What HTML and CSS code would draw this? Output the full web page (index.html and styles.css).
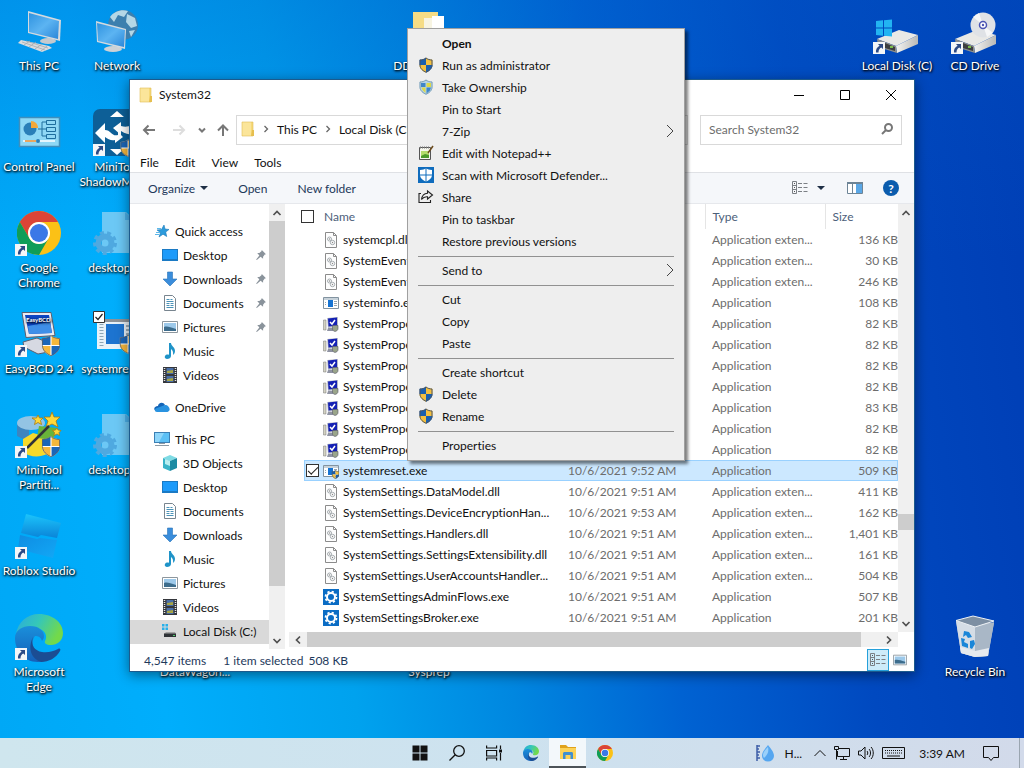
FILE: index.html
```html
<!DOCTYPE html>
<html lang="en">

<head>
    <meta charset="UTF-8">
    <meta name="viewport" content="width=device-width, initial-scale=1.0">
    <title>System32</title>
    <link rel="stylesheet" href="styles.css">
</head>

<body>
    <svg class="sprite" aria-hidden="true">
        <defs>
            <clipPath id="shieldClip"><path d="M8 .5C6.5 2 4 2.7 1.5 2.7V8c0 4 3.5 6.3 6.5 7.7 3-1.4 6.5-3.7 6.5-7.7V2.7C12 2.7 9.5 2 8 .5z"/></clipPath>
            <linearGradient id="screen" x1="0" y1="0" x2="1" y2="1"><stop offset="0" stop-color="#2f93e0"/><stop offset=".5" stop-color="#5cb4f2"/><stop offset="1" stop-color="#2a86d8"/></linearGradient>
            <linearGradient id="edgeA" x1="0" y1="0" x2="1" y2=".4"><stop offset="0" stop-color="#2aa9e0"/><stop offset=".5" stop-color="#35c7b8"/><stop offset="1" stop-color="#73d94a"/></linearGradient>
            <linearGradient id="edgeB" x1="0" y1="0" x2="0" y2="1"><stop offset="0" stop-color="#1a8fdb"/><stop offset="1" stop-color="#1560b8"/></linearGradient>
            <linearGradient id="driveSide" x1="0" y1="0" x2="1" y2="0"><stop offset="0" stop-color="#f4f4f2"/><stop offset="1" stop-color="#b9b9b6"/></linearGradient>
            <linearGradient id="roblox" x1="0" y1="0" x2="0" y2="1"><stop offset="0" stop-color="#1cc4fb"/><stop offset="1" stop-color="#0a84d8"/></linearGradient>
            <linearGradient id="robloxLow" x1="0" y1="0" x2="1" y2="1"><stop offset="0" stop-color="#0f8ce2"/><stop offset="1" stop-color="#12a8f6"/></linearGradient>
        </defs>

        <symbol id="shield" viewBox="0 0 16 16">
            <g clip-path="url(#shieldClip)">
                <path fill="#1a5fae" d="M0 0h8v8H0zM8 8h8v8H8z"/>
                <path fill="#f4c03f" d="M8 0h8v8H8zM0 8h8v8H0z"/>
            </g>
            <path fill="none" stroke="#4c5560" d="M8 1C6.5 2.3 4 3 2 3v5c0 3.8 3.2 6 6 7.2C10.8 14 14 11.8 14 8V3c-2 0-4.5-.7-6-2z"/>
        </symbol>
        <symbol id="shield-big" viewBox="0 0 16 16">
            <g clip-path="url(#shieldClip)">
                <path fill="#fff" d="M0 0h16v16H0z"/>
                <path fill="#1b66b8" d="M0 0h7.6v7.6H0zM8.4 8.4h8v8h-8z"/>
                <path fill="#f6b73c" d="M8.4 0h8v7.6h-8zM0 8.4h7.6v8H0z"/>
            </g>
            <path fill="none" stroke="#55606c" stroke-width=".6" d="M8 .8C6.5 2.2 4 2.9 1.8 2.9V8c0 3.9 3.4 6.2 6.2 7.4 2.8-1.2 6.2-3.5 6.2-7.4V2.9C12 2.9 9.5 2.2 8 .8z"/>
        </symbol>
        <symbol id="shield-light" viewBox="0 0 16 16">
            <g clip-path="url(#shieldClip)">
                <path fill="#b4d3e8" d="M0 0h16v16H0z"/>
                <path fill="#3f86c8" d="M3 4h4.5v4H3zM8.5 8.5H13l-1 3-3.5 3z"/>
                <path fill="#dcd94a" d="M8.5 4H13v4H8.5zM3.5 8.5h4V14l-3-3z"/>
            </g>
            <path fill="none" stroke="#7fa0b4" d="M8 1C6.5 2.3 4 3 2 3v5c0 3.8 3.2 6 6 7.2C10.8 14 14 11.8 14 8V3c-2 0-4.5-.7-6-2z"/>
        </symbol>
        <symbol id="shortcut" viewBox="0 0 12 12">
            <path fill="#f4f6f8" d="M0 0h12v12H0z"/>
            <path fill="#2c4a86" d="M5 2h5v5L8.3 5.5C6.5 6.5 5.5 8 5.5 10.5H3C2.5 7.5 4 5 6.6 3.7z"/>
        </symbol>
        <symbol id="chrome" viewBox="0 0 44 44">
            <circle cx="22" cy="22" r="22" fill="#fbc116"/>
            <path fill="#db4437" d="M2.9 11A22 22 0 0 1 41 11H22a11 11 0 0 0-9.5 16.5z"/>
            <path fill="#0f9d58" d="M2.9 11A22 22 0 0 0 22 44l9.5-16.5a11 11 0 0 1-19 0z"/>
            <circle cx="22" cy="22" r="11" fill="#fff"/>
            <circle cx="22" cy="22" r="9" fill="#3b78e7"/>
        </symbol>
        <symbol id="edge" viewBox="0 0 48 48">
            <path fill="url(#edgeA)" d="M1 20C3 8 12 0 24 0c14 0 24 9 24 19 0 8-6 12-12 12-5 0-7-2-6-4 3-5 0-12-9-13C12 13 4 15 1 20z"/>
            <path fill="url(#edgeB)" d="M0 24c0-8 8-12 15-12 9 0 14 5 14 10 0 2-1 4-2 5-1-4-4-5-7-5-3 3-4 12 3 18 3 3 7 4 10 4-3 3-6 4-10 4C9 48 0 37 0 24z"/>
            <path fill="#1b4d93" d="M18 23c-3 8 2 14 9 15 6 1 12-1 16-3 2-1 3 0 2 2-4 7-11 11-19 11-9-3-14-13-8-25z"/>
        </symbol>
        <symbol id="folder" viewBox="0 0 14 16">
            <path fill="#f6d978" d="M1 1h11v14H1z"/><path fill="#fbe59a" d="M1 1h9v14H1z"/>
            <path fill="#e9c04e" d="M11 9h2v6h-3z"/><path fill="none" stroke="#e0bd55" stroke-width=".6" d="M1 1h11v14H1z"/>
        </symbol>
        <symbol id="pc-small" viewBox="0 0 16 16">
            <path fill="#3b7fb4" d="M0 1h16v11H0z"/><path fill="#5cc0f5" d="M1 2h14v9H1z"/><path fill="#8fd6fa" d="M1 2h9L5 11H1z"/><path fill="#8c9aa5" d="M5 12h6v1H5zM1 14h14v1H1z"/>
        </symbol>
        <symbol id="star" viewBox="0 0 16 16">
            <path fill="#2c9bdc" stroke="#1a78b8" stroke-width=".6" d="M10 2l1 4 4 .5L11.700 9l1 4.500L9 11.200 5 14l1.500-4.500L3 7l4.500-.5z"/><path stroke="#5cb8ea" d="M2 9.500h4M1 11.500h4M3 5.500h4"/>
        </symbol>
        <symbol id="desk-small" viewBox="0 0 16 16"><path fill="#1b7ac4" d="M0 2h16v12H0z"/><path fill="#1e9bfa" d="M1 3h14v9H1z"/></symbol>
        <symbol id="down" viewBox="0 0 16 16"><path fill="#3a8ddb" stroke="#2873b8" stroke-width=".6" d="M5.5 1h5v7H15l-7 7-7-7h4.5z"/></symbol>
        <symbol id="doc" viewBox="0 0 16 16">
            <path fill="#fff" stroke="#78858f" d="M2.5.5h8l3 3v12h-11z"/><path stroke="#4b93b8" d="M4.5 4.5h3M8.5 4.5h2M4.5 6.5h7M4.5 8.5h3M8.5 8.5h3M4.5 10.5h3M8.5 10.5h3M4.5 12.5h7"/>
        </symbol>
        <symbol id="pic" viewBox="0 0 16 16">
            <path fill="#fff" stroke="#8d979e" d="M.5 2.5h15v11H.5z"/><path fill="#9dc9ea" d="M2 4h12v8H2z"/><path fill="#3c6c8c" d="M2 8c3-1 6 0 12 2v2H2z"/>
        </symbol>
        <symbol id="music" viewBox="0 0 16 16"><path fill="#1f93c8" d="M7 0h2c0 3 4 4 4 8 0 2-1 3-2 4 .5-3-.5-5-2-6v7c0 2-2 3-4 3-3 0-3-4 0-4.5 1 0 1.500 0 2 .2z"/></symbol>
        <symbol id="video" viewBox="0 0 16 16">
            <path fill="#34373c" d="M1 0h14v16H1z"/><path stroke="#e6e6e6" stroke-dasharray="1 1" stroke-width="1.5" d="M2.5 1v14M13.5 1v14"/><path fill="#4a6fa8" d="M4.5 1h7v6h-7zM4.5 9h7v6h-7z"/><path fill="#a7a545" d="M5 4l6-1v3H5zM5 12l6-1v3H5z"/>
        </symbol>
        <symbol id="cloud" viewBox="0 0 16 16"><path fill="#1565b8" d="M4 7C4 4 9 2 11 6l-6 6H2C-1 11 0 7 4 7z"/><path fill="#2a93e0" d="M2 12.8C0 12 1 9 3 9l4-1.5L11 6c3-.5 6 4 4 6-1 1-2 1-3 1H3z"/></symbol>
        <symbol id="cube" viewBox="0 0 16 16"><path fill="#7fdbe4" d="M1 3l7-3 7 3-7 3z"/><path fill="#39b4c8" d="M1 3l7 3v10l-7-3z"/><path fill="#1c8ba3" d="M15 3L8 6v10l7-3z"/><path fill="#b7eef0" d="M3 4l5 2v5L3 9z"/></symbol>
        <symbol id="disk-small" viewBox="0 0 16 16"><path fill="#28b0ea" d="M0 1h2.5v2.5H0zM3.5 1H6v2.5H3.500zM0 4.500h2.5V7H0zM3.5 4.500H6V7H3.500z"/><path fill="#a4a4a4" d="M4 9h9l1 2H2z"/><path fill="#2e3236" d="M2 10.5h12V14H2z"/><path fill="#4ecf6a" d="M11 12h2v1h-2z"/></symbol>
        <symbol id="pin" viewBox="0 0 12 12"><path fill="#8a939b" d="M7 0l5 5-1.5.5L8.500 8v2.500L5.500 8 1 12l-.8-.6L4 6.500 1.500 3.500H4L6.500 1.500z"/></symbol>

        <symbol id="dll" viewBox="0 0 16 16">
            <path fill="#fdfdfd" stroke="#8b8b8b" d="M2.5.5h8l3 3v12h-11z"/><path fill="none" stroke="#8b8b8b" d="M10.5.5v3h3"/>
            <circle cx="6.5" cy="7" r="2" fill="none" stroke="#a5acb0"/><circle cx="9.5" cy="10.5" r="2.2" fill="none" stroke="#a5acb0"/><circle cx="6.5" cy="7" r=".7" fill="#8b8b8b"/><circle cx="9.5" cy="10.5" r=".7" fill="#8b8b8b"/>
        </symbol>
        <symbol id="exe" viewBox="0 0 16 16"><path fill="#fff" stroke="#8293a0" d="M.5 2.5h15v11H.5z"/><path fill="#c7d2da" d="M1 3h14v2H1z"/><path fill="#1673d2" d="M5 5h5v7H5z"/><path stroke="#98a5ae" d="M11 6.5h3M11 8.5h3M11 10.5h3M2 7.5h1M2 9.5h1"/></symbol>
        <symbol id="exe-shield" viewBox="0 0 16 16"><use href="#exe" width="16" height="16"/><use href="#shield" x="8" y="7" width="9" height="9"/></symbol>
        <symbol id="props" viewBox="0 0 16 16">
            <path fill="#d4d2c2" stroke="#777" stroke-width=".5" d="M.5 4H3v10H.5z"/><path fill="#b9bcc9" d="M4 2l11-1v10L5 12z"/><path fill="#1420b4" d="M5 2.500l9-1v8l-8.500 1z"/>
            <path fill="none" stroke="#fff" stroke-width="1.5" d="M7 6l2 2 3-4"/><path fill="#8f93a3" d="M5 12h5v3H4z"/><path fill="#9aa58a" stroke="#556" stroke-width=".6" d="M9.500 9.500H15v3c0 2-1.500 2.500-3 3-1.500-.5-2.500-1-2.500-3z"/>
        </symbol>
        <symbol id="gear" viewBox="0 0 16 16"><path fill="#0a6cc4" d="M0 0h16v16H0z"/><circle cx="8" cy="8" r="4" fill="none" stroke="#fff" stroke-width="2"/><circle cx="8" cy="8" r="5.5" fill="none" stroke="#fff" stroke-width="1.8" stroke-dasharray="2.16 2.16"/></symbol>

        <symbol id="notepad" viewBox="0 0 16 16"><path fill="#f6f7ee" stroke="#555" d="M1.5 2.5h11v12h-11z"/><path fill="#b4dc6c" d="M3 6h8v7H3z"/><path fill="#4c9a2a" d="M3 11l4-2 4 1v3H3z"/><path stroke="#777" stroke-dasharray="1 1" stroke-width="2" d="M2 2.5h10"/><path stroke="#6b4a1c" stroke-width="1.5" d="M10 8l5-7"/></symbol>
        <symbol id="defender" viewBox="0 0 16 16"><path fill="#0f6cbd" d="M0 0h16v16H0z"/><path fill="#fff" d="M2 3c3 0 4.500-1 5.500-1.500v6H2zM8.500 1.500C9.500 2 11 3 14 3v4.500H8.500zM2 8.500h5.500v6C4.500 13 2.500 11.500 2 8.500zM8.500 8.500H14c-.5 3-2.500 4.500-5.500 6z"/></symbol>
        <symbol id="share" viewBox="0 0 16 16"><path fill="none" stroke="#222" stroke-width="1.1" d="M3 4.5H1v9h11.5V11M9.5 2l5 4-5 4V7.800C7 7.500 5 8.500 3.500 10.500 4 7 6 4.500 9.500 4.300z"/></symbol>

        <symbol id="drive" viewBox="0 0 48 48">
            <path fill="#e9e9e6" d="M4 31l22-9 19 5-22 11z"/><path fill="url(#driveSide)" d="M23 38l22-11v9l-21 9z"/><path fill="#8d8f8e" d="M4 31l19 7 1 7-19-6z"/><path fill="#3d3f40" d="M12 35l10 4v4l-10-3z"/><path fill="#7cbf4c" d="M17 38h3v2h-3z"/>
        </symbol>
        <symbol id="ini" viewBox="0 0 48 48">
            <path fill="#6cc8f5" d="M9 2h24l8 8v33H9z"/><path fill="#4ab0ea" d="M32 2v8h9z"/>
            <circle cx="12" cy="33" r="6.5" fill="none" stroke="#4fa9e0" stroke-width="6"/><circle cx="12" cy="33" r="10.5" fill="none" stroke="#4fa9e0" stroke-width="3" stroke-dasharray="4 3.33"/>
        </symbol>
        <symbol id="details" viewBox="0 0 16 16"><path fill="none" stroke="#7b7f84" d="M.5 1.5h4v12h-4zM.5 5.5h4M.5 9.5h4M6 3.5h4M11.500 3.500h4M6 7.500h4M11.500 7.500h4M6 11.500h4M11.500 11.500h4"/><path fill="#555" d="M2 3h1v1H2zM2 7h1v1H2zM2 11h1v1H2z"/></symbol>
        <symbol id="chev-up" viewBox="0 0 10 10"><path fill="none" stroke="#505050" stroke-width="1.7" d="M1.5 7L5 3.5 8.5 7"/></symbol>
        <symbol id="chev-down" viewBox="0 0 10 10"><path fill="none" stroke="#505050" stroke-width="1.7" d="M1.5 3L5 6.5 8.5 3"/></symbol>
        <symbol id="chev-left" viewBox="0 0 10 10"><path fill="none" stroke="#505050" stroke-width="1.7" d="M7 1.5L3.5 5 7 8.5"/></symbol>
        <symbol id="chev-right" viewBox="0 0 10 10"><path fill="none" stroke="#505050" stroke-width="1.7" d="M3 1.5L6.5 5 3 8.5"/></symbol>
        <symbol id="crumb" viewBox="0 0 10 10"><path fill="none" stroke="#666" stroke-width="1.3" d="M3.5 2l3 3-3 3"/></symbol>
        <symbol id="submenu" viewBox="0 0 8 14"><path fill="none" stroke="#444" d="M1 1l6 6-6 6"/></symbol>
    </svg>

    <main class="desktop">
        <a class="shortcut c1 r1" href="#">
            <svg viewBox="0 0 48 48"><path fill="#d9dcdf" d="M6 32L3 35l24 9 10-4-3-2z"/><path stroke="#a5abb0" stroke-width=".8" d="M7 34l23 8M11 33l22 7M9 37l6-4M14 39l7-5M20 41l7-5M26 43l6-5"/><ellipse cx="33" cy="33" rx="8" ry="3" fill="#c5cace"/><path fill="#d5dade" d="M13 3l33 9-1 21-32-8z"/><path fill="url(#screen)" d="M14 5l30 8-1 18-29-7z"/></svg>
            <span>This PC</span>
        </a>
        <a class="shortcut c2 r1" href="#">
            <svg viewBox="0 0 48 48"><circle cx="30" cy="17" r="15" fill="#3c7fae"/><path fill="#b4d7e6" d="M17 9c4-6 12-8 18-6l-4 6-6-2-4 7zM34 6l8 4 2 8-6 2-5-6zM36 23l6-1-4 7z"/><ellipse cx="20" cy="41" rx="9" ry="3" fill="#cdd2d6"/><path fill="#d5dade" d="M3 13l30 8-1 20-28-7z"/><path fill="url(#screen)" d="M4 15l28 7-1 17-26-6z"/></svg>
            <span>Network</span>
        </a>
        <a class="shortcut c6 r1" href="#">
            <svg viewBox="0 0 48 48"><path fill="#f5dc85" d="M8 4h25v38H8z"/><path fill="#f7f4e2" d="M19 10h20v30H19z"/><path fill="#fff" d="M27 8h12v14H27z"/></svg>
            <span>DD Utilities 1</span>
        </a>
        <a class="shortcut c12 r1" href="#">
            <svg viewBox="0 0 48 48"><use href="#drive"/><path fill="#22b4f2" d="M3 13l7-.7v7.200H3zM11 12.200l8-.7v8h-8zM3 20.500h7v7.200l-7-.7zM11 20.500h8v8l-8-.7z"/><use href="#shortcut" x="0" y="34" width="12" height="12"/></svg>
            <span>Local Disk (C)</span>
        </a>
        <a class="shortcut c13 r1" href="#">
            <svg viewBox="0 0 48 48"><use href="#drive"/><circle cx="32" cy="17" r="12.5" fill="#dfe2e6"/><path fill="#f6f7f8" d="M32 17L22 9l6-4zM32 17l10 8-6 4z"/><circle cx="32" cy="17" r="3.5" fill="#fff" stroke="#4b55b4" stroke-width="1.5"/><circle cx="32" cy="17" r="1.2" fill="#4b55b4"/><use href="#shortcut" x="0" y="34" width="12" height="12"/></svg>
            <span>CD Drive</span>
        </a>
        <a class="shortcut c1 r2" href="#">
            <svg viewBox="0 0 48 48"><path fill="#8fd8f5" stroke="#3f8fbd" stroke-width="1.5" d="M4.5 8.500h40v29h-40z"/><circle cx="15" cy="20" r="6.5" fill="#2a7fb8"/><path fill="#f2a83a" d="M16 19v-7c4 0 7 3 7 7z"/><path fill="none" stroke="#1e6e9e" d="M23 20h4M27 13v14M27 13h4M27 20h4M27 27h4M31.500 11.500h9v4h-9zM31.500 18.500h9v4h-9zM31.500 25.500h9v4h-9z"/><path stroke="#fff" stroke-width="1.5" d="M8 32h32"/><path stroke="#e88c2e" stroke-width="1.5" d="M10 32h11"/><circle cx="23" cy="32" r="2" fill="#2a7fb8"/></svg>
            <span>Control Panel</span>
        </a>
        <a class="shortcut c2 r2" href="#">
            <svg viewBox="0 0 48 48"><rect width="48" height="47" rx="7" fill="#0d5f97"/><path fill="#fff" d="M24 2l7 6H17zM2 24l10-10v7c6 0 7 7 13 5v-3l5 5-8 6v-3c-4 1-7-1-10-3v6zM20 19l8-6v4c4 1 6 1 12-1v10c-4-1-8-1-12-4v4zM17 40h14l-7 6z"/><use href="#shield-big" x="26" y="30" width="18" height="18"/><use href="#shortcut" y="35" width="12" height="12"/></svg>
            <span>MiniTool ShadowMaker</span>
        </a>
        <a class="shortcut c1 r3" href="#">
            <svg viewBox="0 0 48 48"><use href="#chrome" x="2" y="1" width="44" height="44"/><use href="#shortcut" y="34" width="12" height="12"/></svg>
            <span>Google Chrome</span>
        </a>
        <a class="shortcut c2 r3" href="#">
            <svg viewBox="0 0 48 48"><use href="#ini"/></svg>
            <span>desktop.ini</span>
        </a>
        <a class="shortcut c1 r4" href="#">
            <svg viewBox="0 0 48 48"><path fill="#d6d9e2" stroke="#5b6070" d="M8 31l14-4 14 6-3 8-10 2-14-7z"/><path fill="#e9ebf2" stroke="#5b6070" d="M7 1.500h29l4 23-29 2z"/><path fill="#0d46c4" d="M10 4h24l3 18-23 1z"/><path fill="#3f8fe8" d="M13 15l22-4 2 11-23 1z"/><text x="11" y="11" class="tiny">EasyBCD</text><use href="#shield-big" x="25" y="23" width="22" height="23"/><use href="#shortcut" y="34" width="12" height="12"/></svg>
            <span>EasyBCD 2.4</span>
        </a>
        <a class="shortcut c2 r4" href="#">
            <svg viewBox="0 0 48 48"><path fill="#e7f1f8" d="M4 8h42v30H4z"/><path fill="#8d9297" d="M4 8h42v3H4z"/><path fill="#1d74d0" d="M13 13h18v20H13z"/><path stroke="#8ea6b6" stroke-dasharray="1 2" stroke-width="4" d="M8.500 13v22"/><path stroke="#596a76" d="M33 15h10M33 19h10M33 23h10"/><use href="#shield-big" x="25" y="22" width="20" height="22"/><path fill="#fff" stroke="#333" d="M.5.5h11v11H.5z"/><path fill="none" stroke="#222" stroke-width="1.2" d="M2.500 6L5 8.500 9.500 3"/></svg>
            <span>systemreset...</span>
        </a>
        <a class="shortcut c1 r5" href="#">
            <svg viewBox="0 0 48 48"><path fill="#3d85bf" d="M2 11v13l12 6V12z"/><ellipse cx="16" cy="11" rx="14" ry="7" fill="#93c4e4"/><path fill="#f5d92a" d="M8 27l10-6 14 4v17c-8 4-18 3-24-2z"/><path fill="#69b33a" d="M24 14l18 2-4 12-16-2z"/><path fill="#ffd83a" stroke="#a87b12" stroke-width=".8" d="M37 0l2 5h6l-4 4 2 6-6-3-6 3 2-6-4-4h6zM23 3l1.500 3H28l-2.500 2.500 1 4-3.500-2-3.500 2 1-4L17 6h4.500zM42 16l1 2 3 .5-2 2 .5 3-2.500-1.500-3 1.500.5-3-2-2 3-.5z"/><path stroke="#30323a" stroke-width="2.5" d="M12 36L34 14"/><use href="#shield-big" x="25" y="23" width="22" height="23"/><use href="#shortcut" y="34" width="12" height="12"/></svg>
            <span>MiniTool Partiti...</span>
        </a>
        <a class="shortcut c2 r5" href="#">
            <svg viewBox="0 0 48 48"><use href="#ini"/></svg>
            <span>desktop.ini</span>
        </a>
        <a class="shortcut c1 r6" href="#">
            <svg viewBox="0 0 48 48"><path fill="url(#roblox)" d="M11 1l35 9-4 15-16-3-3 2-17-4z"/><path fill="url(#robloxLow)" d="M5 22l17 4 3-1 17 2-4 18L3 36z"/><use href="#shortcut" y="34" width="12" height="12"/></svg>
            <span>Roblox Studio</span>
        </a>
        <a class="shortcut c1 r7" href="#">
            <svg viewBox="0 0 48 48"><use href="#edge"/><use href="#shortcut" y="34" width="12" height="12"/></svg>
            <span>Microsoft Edge</span>
        </a>
        <a class="shortcut c3 r7" href="#"><svg viewBox="0 0 48 48"><use href="#folder"/></svg><span>DataWagon...</span></a>
        <a class="shortcut c6 r7" href="#"><svg viewBox="0 0 48 48"><use href="#folder"/></svg><span>Sysprep</span></a>
        <a class="shortcut c13 r7" href="#">
            <svg viewBox="0 0 48 48"><path fill="#b9c4d0" d="M5 7l38 2-6 33-13 1-14-4z"/><path fill="#d5dde6" d="M5 7l19 6v30l-14-4z"/><path fill="#a9b7c6" d="M24 13l19-5-6 34-13 1z"/><path fill="#e6eaee" d="M9 33l15 4 14-3-1 8-13 1-14-4z"/><path fill="#7d8fa3" stroke="#eef2f6" d="M5 6.500L22 2l21 5-19 6z"/><path fill="#1a86d8" d="M13 17l5 1 3 5-4 1-2-3-3 2zM10 24l4 1-1 3 4 2v4l-6-2zM19 27l4-1 1 4-3 5-2-1z"/></svg>
            <span>Recycle Bin</span>
        </a>

        <section class="window">
            <header class="titlebar">
                <svg class="folder-icon"><use href="#folder"/></svg>
                <span class="title">System32</span>
                <button class="caption" aria-label="Minimize"><svg viewBox="0 0 10 10"><path d="M0 5.500h10"/></svg></button>
                <button class="caption" aria-label="Maximize"><svg viewBox="0 0 10 10"><path d="M.5.5h9v9h-9z"/></svg></button>
                <button class="caption" aria-label="Close"><svg viewBox="0 0 10 10"><path d="M0 0l10 10M10 0L0 10"/></svg></button>
            </header>

            <div class="navbar">
                <button class="nav-btn" aria-label="Back"><svg viewBox="0 0 14 12"><path d="M13 6H2M6.500 1.500L2 6l4.500 4.500"/></svg></button>
                <button class="nav-btn forward" aria-label="Forward"><svg viewBox="0 0 14 12"><path d="M1 6h11M7.500 1.500L12 6l-4.500 4.500"/></svg></button>
                <button class="nav-btn recent" aria-label="Recent locations"><svg viewBox="0 0 14 12"><path d="M4 4.500l3 3 3-3"/></svg></button>
                <button class="nav-btn up" aria-label="Up"><svg viewBox="0 0 14 12"><path d="M7 12V1.500M2 6.500l5-5 5 5"/></svg></button>
                <div class="address">
                    <svg class="folder-icon"><use href="#folder"/></svg>
                    <svg class="crumb-sep"><use href="#crumb"/></svg>
                    <a href="#">This PC</a>
                    <svg class="crumb-sep"><use href="#crumb"/></svg>
                    <a href="#">Local Disk (C:)</a>
                </div>
                <div class="search">
                    <input type="text" placeholder="Search System32" aria-label="Search System32">
                    <svg viewBox="0 0 12 12"><circle cx="7.500" cy="4.500" r="3.500"/><path d="M5 7l-4 4"/></svg>
                </div>
            </div>

            <nav class="menubar">
                <button>File</button>
                <button>Edit</button>
                <button>View</button>
                <button>Tools</button>
            </nav>

            <div class="toolbar">
                <button class="organize">Organize <svg viewBox="0 0 8 4"><path d="M0 0h8L4 4z"/></svg></button>
                <button class="open">Open</button>
                <button>New folder</button>
                <span class="spacer"></span>
                <button class="views" aria-label="Change your view"><svg class="i16"><use href="#details"/></svg><svg class="drop" viewBox="0 0 8 4"><path d="M0 0h8L4 4z"/></svg></button>
                <button aria-label="Preview pane"><svg class="i16" viewBox="0 0 16 16"><path fill="#fff" stroke="#6d8496" d="M.5 2.500h15v11H.5z"/><path fill="#6d8496" d="M0 2h16v2H0z"/><path fill="#5aa7e6" d="M9 4h6v9H9z"/><path stroke="#6d8496" d="M5.500 4v9"/></svg></button>
                <button class="help" aria-label="Help">?</button>
            </div>

            <div class="content">
                <aside class="tree">
                    <a class="lvl1" href="#"><svg><use href="#star"/></svg>Quick access</a>
                    <a href="#"><svg><use href="#desk-small"/></svg>Desktop<svg class="pin"><use href="#pin"/></svg></a>
                    <a href="#"><svg><use href="#down"/></svg>Downloads<svg class="pin"><use href="#pin"/></svg></a>
                    <a href="#"><svg><use href="#doc"/></svg>Documents<svg class="pin"><use href="#pin"/></svg></a>
                    <a href="#"><svg><use href="#pic"/></svg>Pictures<svg class="pin"><use href="#pin"/></svg></a>
                    <a href="#"><svg><use href="#music"/></svg>Music</a>
                    <a href="#"><svg><use href="#video"/></svg>Videos</a>
                    <a class="lvl1 group" href="#"><svg><use href="#cloud"/></svg>OneDrive</a>
                    <a class="lvl1 group" href="#"><svg><use href="#pc-small"/></svg>This PC</a>
                    <a href="#"><svg><use href="#cube"/></svg>3D Objects</a>
                    <a href="#"><svg><use href="#desk-small"/></svg>Desktop</a>
                    <a href="#"><svg><use href="#doc"/></svg>Documents</a>
                    <a href="#"><svg><use href="#down"/></svg>Downloads</a>
                    <a href="#"><svg><use href="#music"/></svg>Music</a>
                    <a href="#"><svg><use href="#pic"/></svg>Pictures</a>
                    <a href="#"><svg><use href="#video"/></svg>Videos</a>
                    <a class="current" href="#"><svg><use href="#disk-small"/></svg>Local Disk (C:)</a>
                </aside>
                <div class="vscroll tree-scroll">
                    <button aria-label="Scroll up"><svg><use href="#chev-up"/></svg></button>
                    <div class="thumb"></div>
                    <button aria-label="Scroll down"><svg><use href="#chev-down"/></svg></button>
                </div>

                <div class="files">
                    <table>
                        <thead>
                            <tr>
                                <th class="name"><label><input type="checkbox" class="check">Name</label></th>
                                <th class="date">Date</th>
                                <th class="type">Type</th>
                                <th class="size">Size</th>
                            </tr>
                        </thead>
                        <tbody id="rows"></tbody>
                    </table>
                </div>
                <div class="vscroll file-scroll">
                    <button aria-label="Scroll up"><svg><use href="#chev-up"/></svg></button>
                    <div class="thumb"></div>
                    <button aria-label="Scroll down"><svg><use href="#chev-down"/></svg></button>
                </div>
                <div class="hscroll">
                    <button aria-label="Scroll left"><svg><use href="#chev-left"/></svg></button>
                    <div class="thumb"></div>
                    <button aria-label="Scroll right"><svg><use href="#chev-right"/></svg></button>
                </div>
            </div>

            <footer class="statusbar">
                <span class="count">4,547 items</span>
                <span>1 item selected</span>
                <span>508 KB</span>
                <span class="spacer"></span>
                <button class="active" aria-label="Details"><svg class="i16"><use href="#details"/></svg></button>
                <button aria-label="Large icons"><svg class="i14"><use href="#pic"/></svg></button>
            </footer>
        </section>

        <div class="context-menu" role="menu">
            <button class="default">Open</button>
            <button><svg class="ico"><use href="#shield"/></svg>Run as administrator</button>
            <button><svg class="ico"><use href="#shield-light"/></svg>Take Ownership</button>
            <button>Pin to Start</button>
            <button>7-Zip<svg class="sub"><use href="#submenu"/></svg></button>
            <button><svg class="ico"><use href="#notepad"/></svg>Edit with Notepad++</button>
            <button><svg class="ico"><use href="#defender"/></svg>Scan with Microsoft Defender...</button>
            <button><svg class="ico"><use href="#share"/></svg>Share</button>
            <button>Pin to taskbar</button>
            <button>Restore previous versions</button>
            <hr>
            <button>Send to<svg class="sub"><use href="#submenu"/></svg></button>
            <hr>
            <button>Cut</button>
            <button>Copy</button>
            <button>Paste</button>
            <hr>
            <button>Create shortcut</button>
            <button><svg class="ico"><use href="#shield"/></svg>Delete</button>
            <button><svg class="ico"><use href="#shield"/></svg>Rename</button>
            <hr>
            <button>Properties</button>
        </div>
    </main>

    <footer class="taskbar">
        <div class="apps">
            <button aria-label="Start"><svg viewBox="0 0 16 16"><path fill="#111" d="M.5.5h7v7h-7zM8.500.5h7v7h-7zM.5 8.500h7v7h-7zM8.500 8.500h7v7h-7z"/></svg></button>
            <button aria-label="Search"><svg viewBox="0 0 16 16"><circle cx="10" cy="6" r="5.3" fill="none" stroke="#111" stroke-width="1.3"/><path stroke="#111" stroke-width="1.3" d="M6.200 9.800L.5 15.500"/></svg></button>
            <button aria-label="Task view"><svg viewBox="0 0 16 16"><path fill="none" stroke="#111" stroke-width="1.2" d="M.6.5V3h10V.5M.6 5.500h10V11H.6zM.6 15.500V13h10v2.500M14.500.5V4M14.500 8v7.500"/><path fill="#111" d="M13 4.500h3v3h-3z"/></svg></button>
            <button aria-label="Microsoft Edge"><svg viewBox="0 0 16 16"><use href="#edge"/></svg></button>
            <button class="running" aria-label="File Explorer"><svg viewBox="0 0 16 16"><path fill="#e0a21b" d="M0 1h6l2 2h8v12H0z"/><path fill="#fcd257" d="M0 4h16v11H0z"/><path fill="#3f8fd0" d="M3 15V9.500C3 8 4 8 5 8h6c1 0 2 0 2 1.500V15h-2.500v-4h-5v4z"/></svg></button>
            <button aria-label="Google Chrome"><svg class="i14" viewBox="0 0 44 44"><use href="#chrome"/></svg></button>
        </div>
        <div class="tray">
            <button class="weather"><svg viewBox="0 0 20 18"><path stroke="#3f5fa8" stroke-width="1.5" d="M2 1v16M2 2h3M2 5h2M2 8h3M2 11h2M2 14h3"/><path fill="#55a6f0" d="M13 1c3 4 6 7 6 11a6 5.500 0 0 1-12 0c0-4 3-7 6-11z"/><path fill="#9ad0fa" d="M13 3c1 4 0 8-4 11-3-4 1-8 4-11z"/></svg>H...</button>
            <button aria-label="Show hidden icons"><svg viewBox="0 0 12 12"><path d="M.5 9L6 3.500 11.500 9"/></svg></button>
            <button aria-label="Network"><svg class="i16" viewBox="0 0 16 16"><path d="M4 3.500h11.500v8H3.500V6M9.500 11.500v3M6 14.500h7M.5 1.500h4v3h-4zM2.500 5v9.500"/></svg></button>
            <button aria-label="Volume"><svg class="i16" viewBox="0 0 16 16"><path d="M.5 6H3l4-4v12L3 10H.5zM9 6c1 1 1 3 0 4M11 4c2 2 2 6 0 8M13 2c3 3 3 9 0 12"/></svg></button>
            <button class="keyboard" aria-label="Touch keyboard"><svg viewBox="0 0 24 14"><path d="M.5 1.500h22v11H.5zM5 10h13"/><path stroke-dasharray="1 1" d="M3 4.500h17M3 7h17"/></svg></button>
            <span class="clock">3:39 AM</span>
            <button class="notify" aria-label="Notifications"><svg class="i16" viewBox="0 0 16 16"><path d="M.5 1.500h15v11h-5l-2.500 3-2.500-3h-5z"/></svg></button>
            <span class="peek"></span>
        </div>
    </footer>

    <script>
        const files = [
            ["dll", "systemcpl.dll", "", "136 KB"],
            ["dll", "SystemEvents...", "", "30 KB"],
            ["dll", "SystemEvents...", "", "246 KB"],
            ["exe", "systeminfo.exe", "", "108 KB"],
            ["props", "SystemPropert...", "", "82 KB"],
            ["props", "SystemPropert...", "", "82 KB"],
            ["props", "SystemPropert...", "", "82 KB"],
            ["props", "SystemPropert...", "", "82 KB"],
            ["props", "SystemPropert...", "", "83 KB"],
            ["props", "SystemPropert...", "", "82 KB"],
            ["props", "SystemPropert...", "", "82 KB"],
            ["exe-shield", "systemreset.exe", "10/6/2021 9:52 AM", "509 KB"],
            ["dll", "SystemSettings.DataModel.dll", "10/6/2021 9:51 AM", "411 KB"],
            ["dll", "SystemSettings.DeviceEncryptionHan...", "10/6/2021 9:53 AM", "162 KB"],
            ["dll", "SystemSettings.Handlers.dll", "10/6/2021 9:51 AM", "1,401 KB"],
            ["dll", "SystemSettings.SettingsExtensibility.dll", "10/6/2021 9:51 AM", "161 KB"],
            ["dll", "SystemSettings.UserAccountsHandler...", "10/6/2021 9:51 AM", "504 KB"],
            ["gear", "SystemSettingsAdminFlows.exe", "10/6/2021 9:51 AM", "507 KB"],
            ["gear", "SystemSettingsBroker.exe", "10/6/2021 9:51 AM", "201 KB"]
        ];

        const tbody = document.getElementById("rows");

        files.forEach(([icon, name, date, size]) => {
            const row = document.createElement("tr");
            const selected = name === "systemreset.exe";
            const type = icon === "dll" ? "Application exten..." : "Application";
            const check = selected ? `<input type="checkbox" class="check" aria-label="${name}" checked>` : "";

            if (selected) row.className = "selected";
            row.innerHTML = `
                <td><div class="file"><span class="pick">${check}</span><svg><use href="#${icon}"/></svg><span>${name}</span></div></td>
                <td class="date">${date}</td>
                <td class="type">${type}</td>
                <td class="size">${size}</td>`;
            tbody.appendChild(row);
        });
    </script>
</body>

</html>
```

FILE: styles.css
```css
* {
    box-sizing: border-box;
}

body {
    margin: 0;
    height: 100vh;
    display: flex;
    flex-direction: column;
    overflow: hidden;
    font-family: Lato, "Open Sans", sans-serif;
    font-size: 12px;
    font-variant-ligatures: none;
    line-height: 15px;
    color: #111;
}

button {
    border: 0;
    padding: 0;
    background: none;
    font: inherit;
    color: inherit;
    display: flex;
    align-items: center;
    white-space: nowrap;
}

a {
    color: inherit;
    text-decoration: none;
    white-space: nowrap;
}

svg {
    display: block;
    flex: none;
}

.sprite {
    position: absolute;
    width: 0;
    height: 0;
}

.i16 {
    width: 16px;
    height: 16px;
}

.i14 {
    width: 14px;
    height: 14px;
}

.spacer {
    flex: 1;
}

/* desktop */
.desktop {
    position: relative;
    flex: 1;
    min-height: 0;
    display: grid;
    grid-template-columns: repeat(auto-fill, 78px);
    grid-template-rows: repeat(7, 101px);
    padding-top: 8px;
    background:
        linear-gradient(180deg, rgba(0, 90, 200, .3), transparent 35%),
        linear-gradient(82deg, #00a8f6 0%, #00aefc 15%, #00a2ee 32%, #0087e0 46%, #0062d2 61%, #0049c0 78%, #003db4 100%);
}

.shortcut {
    display: flex;
    flex-direction: column;
    align-items: center;
    color: #fff;
    text-shadow: 1px 1px 2px #000, 0 1px 3px rgba(0, 0, 0, .8);
}

.shortcut svg {
    width: 48px;
    height: 48px;
    margin-bottom: 2px;
}

.shortcut span {
    max-width: 78px;
    text-align: center;
    white-space: normal;
}

.tiny {
    font-size: 6px;
    font-weight: bold;
    fill: #fff;
}

.c1 { grid-column: 1; }
.c2 { grid-column: 2; }
.c3 { grid-column: 3; }
.c6 { grid-column: 6; }
.c12 { grid-column: -3; }
.c13 { grid-column: -2; }

.r1 { grid-row: 1; }
.r2 { grid-row: 2; }
.r3 { grid-row: 3; }
.r4 { grid-row: 4; }
.r5 { grid-row: 5; }
.r6 { grid-row: 6; }
.r7 { grid-row: 7; }

/* explorer window */
.window {
    position: absolute;
    top: 79px;
    left: 129px;
    right: 109px;
    bottom: 66px;
    display: flex;
    flex-direction: column;
    overflow: hidden;
    background: #fff;
    border: 1px solid #1c5a8c;
    box-shadow: 0 3px 12px rgba(0, 0, 0, .45);
}

.titlebar {
    display: flex;
    align-items: center;
    height: 29px;
    padding-left: 9px;
}

.folder-icon {
    width: 14px;
    height: 16px;
}

.title {
    flex: 1;
    margin-left: 6px;
}

.caption {
    width: 46px;
    height: 29px;
    justify-content: center;
}

.caption svg {
    width: 10px;
    height: 10px;
    fill: none;
    stroke: #000;
}

.navbar {
    display: flex;
    align-items: center;
    height: 42px;
    padding: 0 12px;
}

.nav-btn svg {
    width: 14px;
    height: 12px;
    fill: none;
    stroke: #777;
    stroke-width: 2;
}

.nav-btn.forward {
    margin-left: 16px;
}

.nav-btn.forward svg {
    stroke: #ddd;
}

.nav-btn.recent {
    margin-left: 9px;
}

.nav-btn.up {
    margin: 0 6px 0 7px;
}

.address {
    flex: 1;
    display: flex;
    align-items: center;
    height: 30px;
    padding: 0 0 2px 4px;
    border: 1px solid #d9d9d9;
}

.crumb-sep {
    width: 10px;
    height: 10px;
    margin: 0 6px;
}

.search {
    display: flex;
    align-items: center;
    width: 202px;
    height: 30px;
    margin-left: 12px;
    padding: 0 8px 2px;
    border: 1px solid #d9d9d9;
}

.search input {
    flex: 1;
    min-width: 0;
    padding: 0;
    border: 0;
    outline: 0;
    font: inherit;
}

.search input::placeholder {
    color: #6d6d6d;
}

.search svg {
    width: 12px;
    height: 12px;
    fill: none;
    stroke: #777;
    stroke-width: 2;
}

.menubar {
    display: flex;
    gap: 16px;
    height: 21px;
    padding: 2px 0 0 10px;
}

.toolbar {
    display: flex;
    align-items: center;
    height: 32px;
    padding: 0 15px 0 18px;
    background: #f5f7fa;
    border-top: 1px solid #dfe1e5;
    border-bottom: 1px solid #e6e8ec;
    color: #1e395b;
}

.toolbar .organize svg,
.toolbar .drop {
    width: 8px;
    height: 4px;
    margin-left: 5px;
    fill: #1e2f45;
}

.toolbar .open {
    margin: 0 30px;
}

.toolbar .views {
    margin-right: 22px;
}

.toolbar .drop {
    margin-left: 9px;
}

.toolbar .help {
    width: 16px;
    height: 16px;
    margin-left: 20px;
    justify-content: center;
    border-radius: 50%;
    background: #0b5cad;
    color: #fff;
    font-weight: bold;
}

.content {
    flex: 1;
    min-height: 0;
    display: grid;
    grid-template-columns: 139px 16px 1fr 16px;
    grid-template-rows: 1fr 17px;
}

.tree {
    grid-row: 1 / 3;
    overflow: hidden;
    padding-top: 16px;
}

.tree a {
    display: flex;
    align-items: center;
    gap: 5px;
    height: 24px;
    padding: 0 0 2px 32px;
}

.tree svg {
    width: 16px;
    height: 16px;
}

.tree .lvl1 {
    padding-left: 24px;
}

.tree .group {
    margin-top: 8px;
}

.tree .current {
    background: #d9d9d9;
}

.tree .pin {
    width: 10px;
    height: 10px;
    margin-left: auto;
    margin-right: 3px;
}

.vscroll {
    display: flex;
    flex-direction: column;
    background: #f0f0f0;
}

.vscroll button {
    width: 16px;
    height: 17px;
    justify-content: center;
}

.vscroll svg,
.hscroll svg {
    width: 10px;
    height: 10px;
}

.vscroll .thumb,
.hscroll .thumb {
    background: #cdcdcd;
}

.tree-scroll {
    grid-row: 1 / 3;
}

.tree-scroll .thumb {
    flex: 0 0 82%;
}

.vscroll button:last-child {
    margin-top: auto;
}

.file-scroll .thumb {
    height: 16px;
    margin-top: 293px;
}

.files {
    overflow: hidden;
    padding: 0 0 0 19px;
}

table {
    width: 100%;
    table-layout: fixed;
    border-collapse: collapse;
}

th,
td {
    height: 21px;
    padding: 0 0 0 7px;
    text-align: left;
    font-weight: normal;
    white-space: nowrap;
    color: #6d6d6d;
}

th {
    height: 25px;
    border-right: 1px solid #e5e5e5;
    color: #4c607a;
}

th:last-child {
    border-right: 0;
}

th.name {
    padding: 0;
}

th.name label {
    display: flex;
    align-items: center;
    gap: 10px;
    margin-left: -3px;
}

th.date {
    width: 144px;
}

th.type {
    width: 120px;
}

th.size {
    width: 73px;
}

td:first-child {
    padding: 0;
    color: #111;
}

td.size {
    padding: 0;
    text-align: right;
}

.file {
    display: flex;
    align-items: center;
    gap: 4px;
}

.file svg {
    width: 16px;
    height: 16px;
}

.pick {
    display: flex;
    justify-content: flex-end;
    width: 15px;
}

.check {
    appearance: none;
    width: 13px;
    height: 13px;
    margin: 0;
    border: 1px solid #333;
    background: #fff;
}

.check:checked::after {
    content: "";
    display: block;
    width: 9px;
    height: 4px;
    margin: 2px 1px;
    border-left: 1px solid #222;
    border-bottom: 1px solid #222;
    transform: rotate(-45deg);
}

.selected {
    background: #cce8ff;
    outline: 1px solid #99d1ff;
    outline-offset: -1px;
}

.hscroll {
    grid-column: 3 / 5;
    display: flex;
    align-items: center;
    height: 15px;
    margin: 0 16px 0 4px;
    background: #f0f0f0;
}

.hscroll button {
    width: 18px;
    height: 15px;
    justify-content: center;
}

.hscroll .thumb {
    width: 91%;
    height: 15px;
}

.hscroll button:last-child {
    margin-left: auto;
}

.statusbar {
    display: flex;
    align-items: center;
    height: 22px;
    padding: 0 3px 0 14px;
    gap: 5px;
    color: #1e395b;
}

.statusbar .count {
    margin-right: 12px;
}

.statusbar button {
    width: 22px;
    height: 22px;
    justify-content: center;
}

.statusbar .active {
    margin-right: -5px;
    background: #cdebf9;
    border: 1px solid #26a0da;
}

/* context menu */
.context-menu {
    position: absolute;
    top: 28px;
    left: 407px;
    width: 278px;
    padding: 4px 2px 3px;
    background: #eee;
    border: 1px solid #a0a0a0;
    box-shadow: 3px 3px 3px rgba(0, 0, 0, .5);
}

.context-menu button {
    width: 100%;
    height: 22px;
    padding: 0 0 2px 32px;
}

.context-menu .default {
    font-weight: bold;
}

.context-menu .ico {
    width: 16px;
    height: 16px;
    margin: 0 8px 0 -24px;
}

.context-menu .sub {
    width: 8px;
    height: 14px;
    margin-left: auto;
    margin-right: 8px;
}

.context-menu hr {
    height: 1px;
    margin: 3px 8px;
    border: 0;
    background: #919191;
}

/* taskbar */
.taskbar {
    display: grid;
    grid-template-columns: 1fr auto 1fr;
    height: 30px;
    background: linear-gradient(90deg, #cfe6ee, #cde2ef 50%, #d2daea);
}

.apps {
    grid-column: 2;
    display: flex;
}

.apps button {
    width: 37px;
    height: 30px;
    justify-content: center;
}

.apps svg {
    width: 16px;
    height: 16px;
}

.apps .running {
    background: #f3f8fb;
    border-bottom: 2px solid #4c5358;
}

.tray {
    display: flex;
    align-items: center;
    justify-content: flex-end;
    gap: 8px;
}

.tray svg {
    width: 12px;
    height: 12px;
    fill: none;
    stroke: #111;
    stroke-width: 1;
}

.tray .i16 {
    width: 16px;
    height: 16px;
}

.tray .weather {
    gap: 10px;
    margin-right: 4px;
}

.tray .weather svg {
    width: 20px;
    height: 18px;
    stroke: none;
}

.tray .keyboard svg {
    width: 24px;
    height: 14px;
}

.clock {
    margin: 0 10px 0 5px;
}

.notify {
    margin-right: 13px;
}

.peek {
    width: 5px;
    height: 30px;
    margin-left: -1px;
    border-left: 1px solid #9aa5b0;
}
```
